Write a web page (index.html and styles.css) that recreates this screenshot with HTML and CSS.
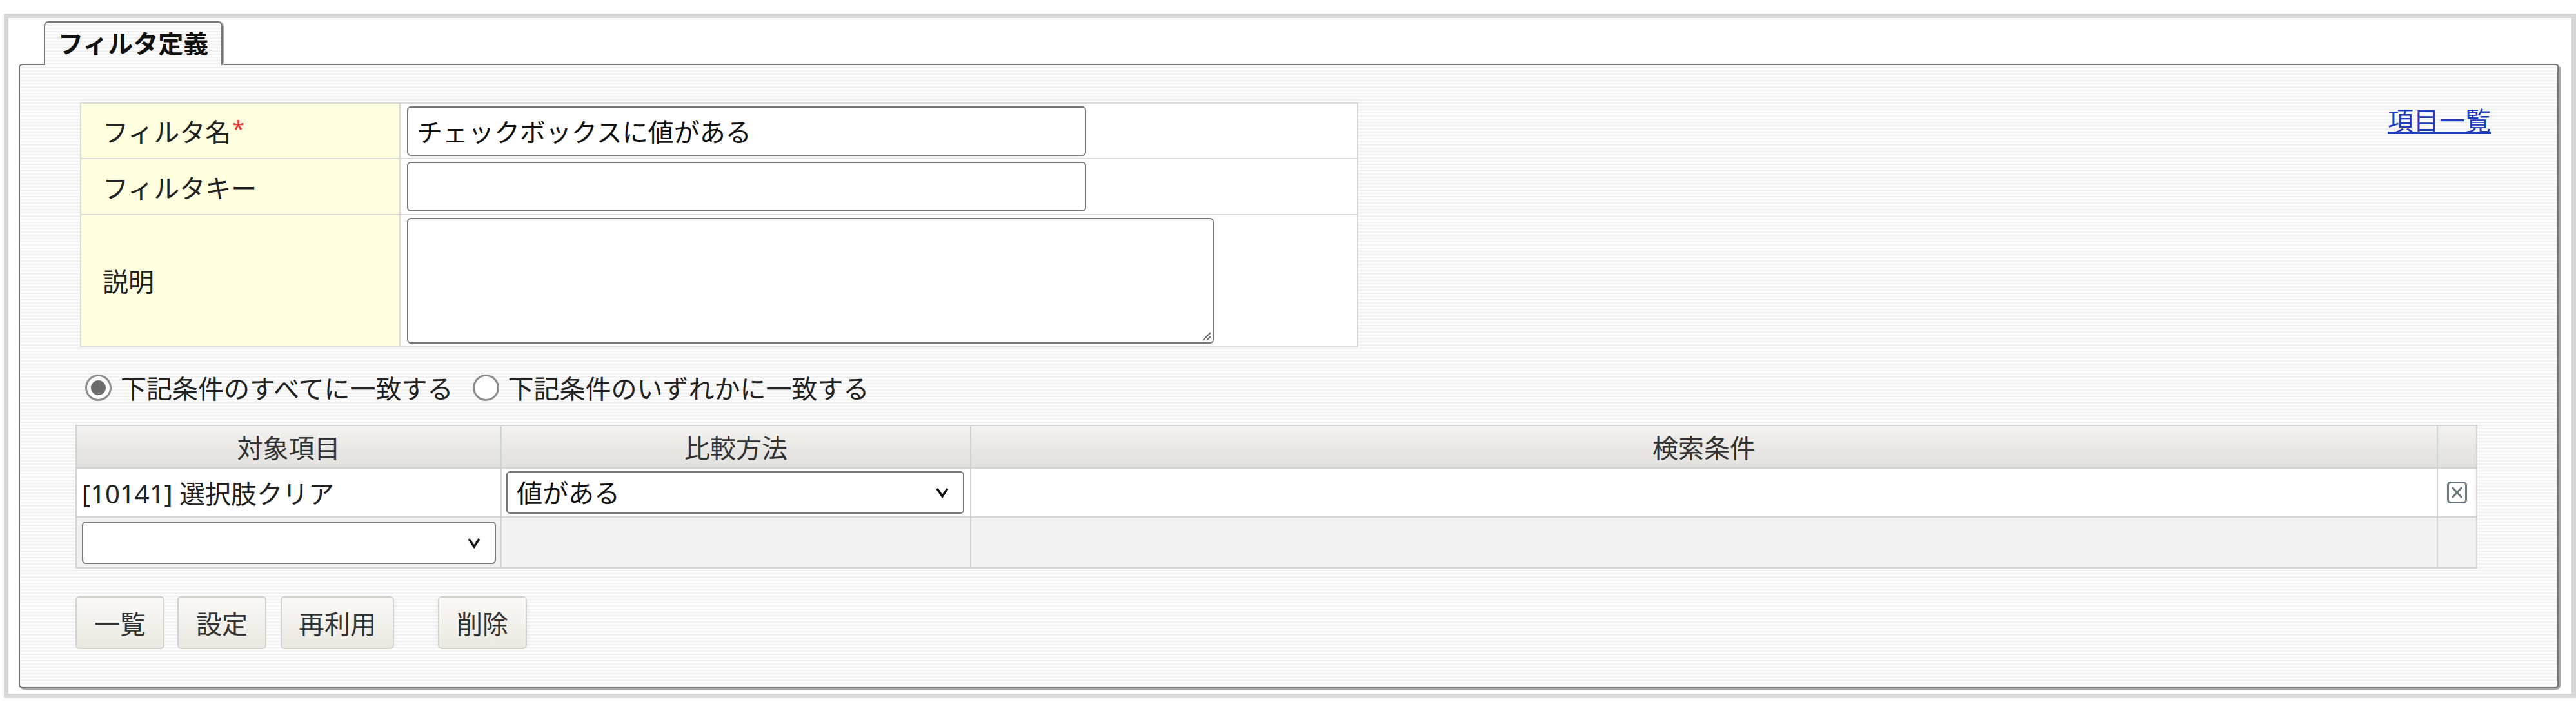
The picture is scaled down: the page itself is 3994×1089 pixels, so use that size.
FILE: index.html
```html
<!DOCTYPE html>
<html lang="ja">
<head>
  <meta charset="UTF-8">
  <title>フィルタ定義</title>
  <link rel="stylesheet" href="styles.css">
</head>
<body>
  <div class="frame">
    <div class="tabs">
      <span class="tab">フィルタ定義</span>
    </div>

    <div class="panel">
      <!-- 基本情報 -->
      <div class="top">
        <table class="def">
          <tr class="row-name">
            <td class="label">フィルタ名<span class="req">*</span></td>
            <td><input class="text" type="text" value="チェックボックスに値がある"></td>
          </tr>
          <tr class="row-key">
            <td class="label">フィルタキー</td>
            <td><input class="text" type="text"></td>
          </tr>
          <tr class="row-desc">
            <td class="label">説明</td>
            <td>
              <span class="memo-wrap">
                <textarea class="memo"></textarea>
                <svg class="grip" width="16" height="16" viewBox="0 0 16 16"><path d="M15 3 L3 15 M15 9 L9 15" stroke="#666" stroke-width="2" fill="none"/></svg>
              </span>
            </td>
          </tr>
        </table>
        <a class="items-link" href="#">項目一覧</a>
      </div>

      <!-- 一致条件 -->
      <div class="match">
        <label><input type="radio" name="match" checked>下記条件のすべてに一致する</label>
        <label><input type="radio" name="match">下記条件のいずれかに一致する</label>
      </div>

      <!-- 条件一覧 -->
      <table class="conds">
        <tr class="head">
          <th class="c1">対象項目</th>
          <th class="c2">比較方法</th>
          <th class="c3">検索条件</th>
          <th class="c4"></th>
        </tr>
        <tr class="row">
          <td class="c1">[10141] 選択肢クリア</td>
          <td class="c2">
            <span class="pick">
              <select class="sel sel-op"><option>値がある</option></select>
              <svg class="chev" width="24" height="18" viewBox="0 0 24 18"><path d="M4 3 L12 15 L20 3" stroke="#111" stroke-width="3.5" fill="none"/></svg>
            </span>
          </td>
          <td class="c3"></td>
          <td class="c4">
            <svg class="del" width="31" height="34" viewBox="0 0 31 34"><rect x="1.5" y="1.5" width="28" height="31" rx="4" stroke="#6c7a7f" stroke-width="3" fill="none"/><path d="M8 9 L23 25 M23 9 L8 25" stroke="#6c7a7f" stroke-width="3"/></svg>
          </td>
        </tr>
        <tr class="row new">
          <td class="c1">
            <span class="pick">
              <select class="sel sel-field"><option></option></select>
              <svg class="chev" width="24" height="18" viewBox="0 0 24 18"><path d="M4 3 L12 15 L20 3" stroke="#111" stroke-width="3.5" fill="none"/></svg>
            </span>
          </td>
          <td class="c2"></td>
          <td class="c3"></td>
          <td class="c4"></td>
        </tr>
      </table>

      <!-- ボタン -->
      <div class="buttons">
        <button type="button" class="btn">一覧</button>
        <button type="button" class="btn">設定</button>
        <button type="button" class="btn reuse">再利用</button>
        <button type="button" class="btn remove">削除</button>
      </div>
    </div>
  </div>
</body>
</html>
```

FILE: styles.css
```css
body {
  margin: 0;
  font-family: "Noto Sans", "Noto Sans CJK JP", sans-serif;
  font-size: 40px;
  color: #222;
  background: #fff;
}
.frame {
  box-sizing: border-box;
  width: 3988px;
  height: 1062px;
  margin: 21px 0 0 6px;
  border: 7px solid #d6d6d6;
  padding: 5px 19px 0 16px;
}
.tabs {
  display: flex;
  padding-left: 39px;
  margin-bottom: -2px;
  position: relative;
  z-index: 1;
}
.tab {
  box-sizing: border-box;
  width: 277px;
  height: 68px;
  border: 2px solid #777;
  border-bottom: none;
  border-radius: 7px 7px 0 0;
  box-shadow: 2px 0 0 #b4b4b4;
  background: repeating-linear-gradient(to bottom, #fcfcfc 0, #fcfcfc 3px, #f0f0f0 3px, #f0f0f0 5px);
  font-weight: bold;
  font-size: 39px;
  line-height: 64px;
  padding-left: 20px;
  color: #111;
}
.panel {
  border: 2px solid #777;
  border-right-width: 3px;
  border-bottom-width: 3px;
  border-radius: 6px;
  box-shadow: 2px 2px 0 #aaa;
  background: repeating-linear-gradient(to bottom, #fcfcfc 0, #fcfcfc 3px, #f0f0f0 3px, #f0f0f0 5px);
  padding: 58px 0 58px 86px;
}
.top {
  display: flex;
  justify-content: space-between;
  align-items: flex-start;
}
.items-link {
  margin-right: 103px;
  line-height: 56px;
  color: #1f3cba;
  text-decoration: underline;
}

/* 基本情報テーブル */
.def {
  margin-left: 7px;
  width: 1982px;
  table-layout: fixed;
  border-spacing: 0;
  border-top: 2px solid #d9d9d9;
  border-left: 2px solid #d9d9d9;
  background: #fff;
}
.def td {
  box-sizing: border-box;
  border-right: 2px solid #d9d9d9;
  border-bottom: 2px solid #d9d9d9;
  padding: 0 10px;
  vertical-align: middle;
}
.def td.label {
  width: 495px;
  background: #ffffe0;
  padding-left: 33px;
}
.row-name td { height: 86px; }
.row-key td { height: 87px; }
.row-desc td { height: 204px; }
.req {
  color: #f03030;
  font-size: 34px;
  vertical-align: 8px;
  margin-left: 2px;
}
.text {
  display: block;
  box-sizing: border-box;
  width: 1053px;
  height: 77px;
  border: 2px solid #767676;
  border-radius: 6px;
  padding: 0 13px;
  font: inherit;
  color: #111;
  background: #fff;
}
.memo-wrap {
  position: relative;
  display: block;
  width: 1251px;
}
.memo {
  display: block;
  box-sizing: border-box;
  width: 1251px;
  height: 195px;
  border: 2px solid #767676;
  border-radius: 6px;
  resize: none;
  font: inherit;
  background: #fff;
}
.grip {
  position: absolute;
  right: 4px;
  bottom: 4px;
}

/* 一致条件 */
.match {
  display: flex;
  align-items: center;
  height: 56px;
  margin: 35px 0 30px;
  padding-left: 15px;
}
.match label {
  display: flex;
  align-items: center;
}
.match label + label {
  margin-left: 30px;
}
.match input {
  appearance: none;
  box-sizing: border-box;
  width: 41px;
  height: 41px;
  margin: 0 14px 0 0;
  border: 3px solid #8c8c8c;
  border-radius: 50%;
  background: #fff;
}
.match input:checked {
  background: radial-gradient(circle, #6c6c6c 0, #6c6c6c 11px, #fff 12px);
}

/* 条件テーブル */
.conds {
  width: 3724px;
  table-layout: fixed;
  border-spacing: 0;
  border-top: 2px solid #d4d4d4;
  border-left: 2px solid #d4d4d4;
}
.conds th, .conds td {
  box-sizing: border-box;
  border-right: 2px solid #d4d4d4;
  border-bottom: 2px solid #d4d4d4;
  padding: 0 7px;
  vertical-align: middle;
}
.conds th {
  height: 66px;
  font-weight: normal;
  color: #333;
  background: linear-gradient(to bottom, #f3f2f0, #e7e6e2 60%, #e2e1dd);
}
.conds .c1 { width: 659px; }
.conds .c2 { width: 728px; }
.conds .c3 { width: 2274px; }
.conds .c4 { width: 61px; text-align: center; padding: 0; }
.conds .row td {
  height: 76px;
  background: #fff;
}
.conds .row.new td {
  height: 79px;
  background: #f2f2f2;
}
.conds .row td.c1 {
  padding-left: 8px;
}
.del {
  display: block;
  margin: 0 auto;
}
.pick {
  position: relative;
  display: block;
}
.sel {
  display: block;
  appearance: none;
  box-sizing: border-box;
  height: 66px;
  border: 2px solid #767676;
  border-radius: 6px;
  padding: 0 14px;
  font: inherit;
  color: #111;
  background: #fff;
}
.sel-op { width: 710px; }
.sel-field { width: 642px; }
.chev {
  position: absolute;
  top: 50%;
  margin-top: -9px;
  pointer-events: none;
}
.c2 .chev { left: 664px; }
.c1 .chev { left: 596px; }

/* ボタン */
.buttons {
  display: flex;
  gap: 20px;
  margin-top: 43px;
}
.btn {
  box-sizing: border-box;
  height: 82px;
  padding: 0 27px;
  border: 2px solid #d3d1cc;
  border-radius: 6px;
  background: linear-gradient(to bottom, #faf9f6, #ebe8e1);
  font: inherit;
  color: #333;
}
.btn.reuse { margin-left: 2px; padding: 0 26px; }
.btn.remove { margin-left: 48px; }
```
